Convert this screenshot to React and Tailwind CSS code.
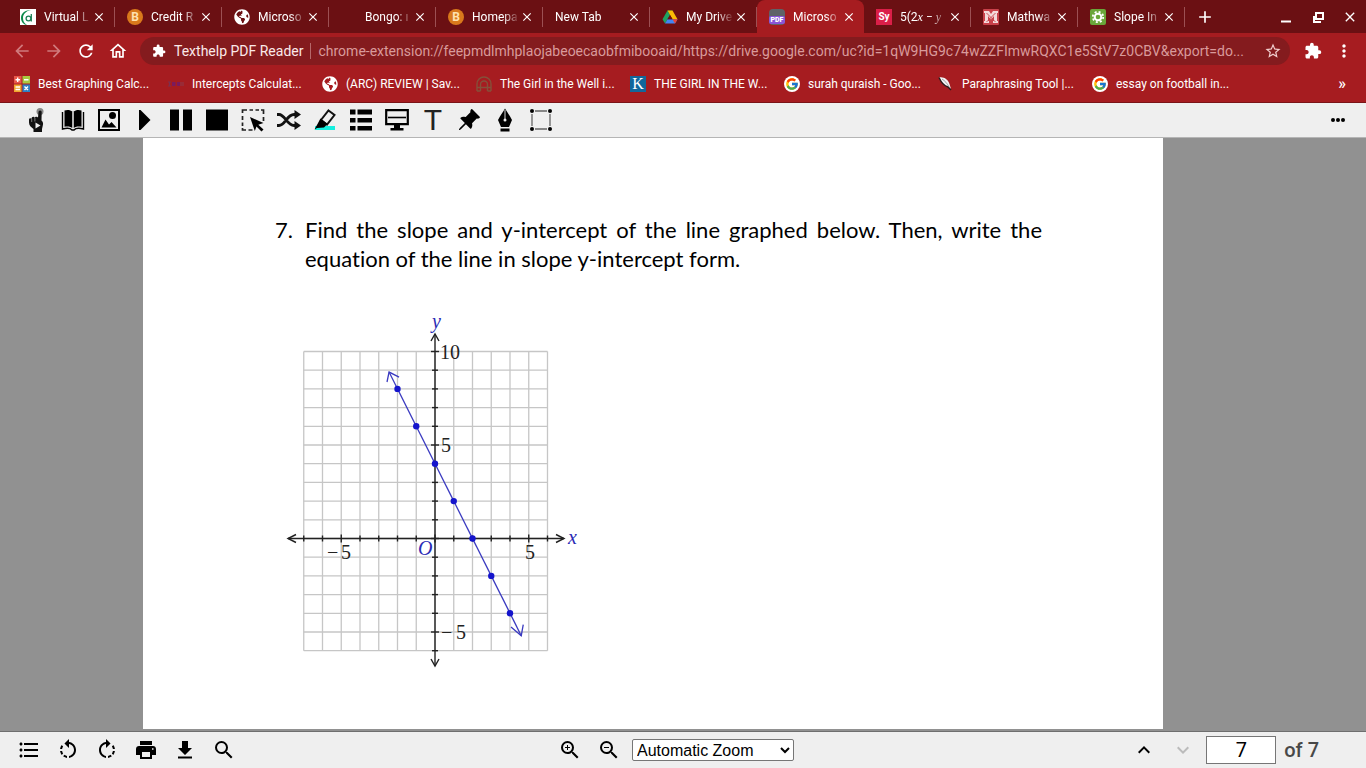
import {
  MdAdd,
  MdArrowBack,
  MdArrowForward,
  MdClose,
  MdExtension,
  MdFormatListBulleted,
  MdKeyboardArrowDown,
  MdKeyboardArrowUp,
  MdMoreVert,
  MdOutlineHome,
  MdRefresh,
  MdRotateLeft,
  MdRotateRight,
  MdSearch,
  MdStarBorder,
  MdZoomIn,
  MdZoomOut,
} from 'react-icons/md';
import { FaGlobeAmericas } from 'react-icons/fa';
import { BsPinAngleFill } from 'react-icons/bs';
import { FcGoogle } from 'react-icons/fc';

/* ---------- favicons ---------- */

const CollegeIcon = () => (
  <svg viewBox="0 0 16 16" className="size-4">
    <rect width="16" height="16" fill="#fff" />
    <path d="M11 1C4 1 1 5 1 9c0 4 3 7 6 7-3-2-4-4-4-7 0-4 3-7 8-8z" fill="#0b8a4b" />
    <circle cx="8.500" cy="9.500" r="2.400" fill="none" stroke="#1c7f55" strokeWidth="1.300" />
    <path d="M11.300 5v7.500" stroke="#1c7f55" strokeWidth="1.300" />
  </svg>
);

const BartlebyIcon = () => (
  <span className="flex size-4 items-center justify-center rounded-full bg-[#d9791c] text-xs font-bold leading-none text-[#ffe2b0]">
    B
  </span>
);

const GlobeIcon = () => <FaGlobeAmericas className="size-4 text-white" />;

const DriveIcon = () => (
  <svg viewBox="0 0 16 16" className="size-4">
    <path d="M5.500 1.500h5L8 6z" fill="#188038" />
    <path d="M5.500 1.500L8 6 3 14.500.500 10.200z" fill="#1ea362" />
    <path d="M10.500 1.500L15.500 10.200h-5L5.500 1.500z" fill="#fbbc05" />
    <path d="M5.500 10.200h10L13 14.500H3z" fill="#4285f4" />
    <path d="M10.500 10.200h5L13 14.500z" fill="#ea4335" />
    <path d="M8 6l2.500 4.200h-5z" fill="#6b1013" />
  </svg>
);

const PdfIcon = () => (
  <span className="flex size-4 items-end justify-center rounded-sm bg-[#5f6368] pb-px">
    <span className="w-4 rounded-xs bg-[#8a55d8] text-center text-[7px] font-black leading-[8px] text-white">PDF</span>
  </span>
);

const SymbolabIcon = () => (
  <span className="flex size-4 items-center justify-center bg-[#db1f48] text-[10px] font-bold leading-none text-white">
    Sy
  </span>
);

const MathwayIcon = () => (
  <svg viewBox="0 0 16 16" className="size-4">
    <rect width="16" height="16" rx="1" fill="#c8414a" />
    <path d="M1 2h5l2 3 2-3h5v2h-1v8h1v2h-5v-2h1V7L8 10.500 5 7v5h1v2H1v-2h1V4H1z" fill="#f3d9da" />
    <path d="M3.500 4l9 9M12.500 4l-9 9" stroke="#c8414a" strokeWidth=".9" />
  </svg>
);

const GearIcon = () => (
  <svg viewBox="0 0 16 16" className="size-4">
    <rect width="16" height="16" rx="2" fill="#6aa63a" />
    <circle cx="8" cy="8" r="3.300" fill="none" stroke="#fff" strokeWidth="2" />
    <circle cx="8" cy="8" r="5.200" fill="none" stroke="#fff" strokeWidth="1.800" strokeDasharray="2.040 2.040" />
  </svg>
);

const CalcIcon = () => (
  <svg viewBox="0 0 16 16" className="size-4">
    <rect width="7.500" height="7.500" fill="#e8574a" />
    <rect x="8.500" width="7.500" height="7.500" fill="#a9c83f" />
    <rect y="8.500" width="7.500" height="7.500" fill="#f1a52c" />
    <rect x="8.500" y="8.500" width="7.500" height="7.500" fill="#2f7fc1" />
    <path
      d="M3.700 1.500v4.500M1.500 3.700H6M10 3.700h4.500M1.500 11h4.500M1.500 13.500h4.500M10.500 10.500l3.500 3.500M14 10.500L10.500 14"
      stroke="#fff"
      strokeWidth="1.400"
    />
  </svg>
);

const SeriesIcon = () => (
  <svg viewBox="0 0 16 16" className="size-4">
    <path d="M0 6h3M0 10h3M1.500 6v4" stroke="#7a3050" />
    <path d="M4 6h3.500v4H4zM9 6h3v4H9z" fill="#7b1a5c" />
    <path d="M13 6v4M15 6v4" stroke="#8c3a4c" />
  </svg>
);

const ArchIcon = () => (
  <svg viewBox="0 0 16 16" className="size-4" fill="none" stroke="#85503a" strokeWidth="1.400">
    <path d="M1 15V8a7 7 0 0 1 14 0v7M4.500 15V8.500a3.500 3.500 0 0 1 7 0V15M1 11.500h14M1 15h3.500M11.500 15H15" />
  </svg>
);

const KIcon = () => (
  <span className="flex size-4 items-center justify-center bg-[#12679b] font-['Liberation_Serif',serif] text-base leading-none text-white">
    K
  </span>
);

const GoogleIcon = () => (
  <span className="flex size-4 items-center justify-center rounded-full bg-white">
    <FcGoogle className="size-3.5" />
  </span>
);

const QuillIcon = () => (
  <svg viewBox="0 0 16 16" className="size-4">
    <path d="M1 1.500c5-1 9 2 10.500 6.500l1.500 5-3-2C6 10 3 6 1 1.500z" fill="#f3f3f3" />
    <path d="M1 1.500c2 4.500 5 8.500 9 9.500l3 3" stroke="#2b1a1a" strokeWidth="1.400" fill="none" />
    <path d="M4 3c3 2 5 4 7 8" stroke="#777" strokeWidth=".7" fill="none" />
  </svg>
);

/* ---------- reader icons, 24 x 24 ---------- */

const HandIcon = () => (
  <svg viewBox="0 0 24 24" className="size-6">
    <circle cx="15" cy="3.500" r="3.500" fill="#888" />
    <path
      d="M13.500 4a1.600 1.600 0 0 1 3.200 0l-.2 8.500c1.500 1 2 3 1.300 5L17 21v3H8.500v-3C6 19 4 17.500 4 14.500V11.500c.3-1.500 2-1.500 2.500-.5 0-2.500 2.500-3 3.200-1.200.5-1.500 2.700-1.500 3.300-.3z"
      fill="#111"
    />
    <path d="M6.700 11v3M9.900 10v3.500" stroke="#aaa" strokeWidth=".7" />
    <path d="M10.500 14.500l5 3-5 3z" fill="#efefef" />
  </svg>
);

const BookIcon = () => (
  <svg viewBox="0 0 24 24" className="size-6">
    <path d="M3.500 2.500c3-1 6-.5 8 1.200V20c-2-1.600-5-2-8-1.200zM20.500 2.500c-3-1-6-.5-8 1.200V20c2-1.600 5-2 8-1.200z" />
    <path d="M1.500 4v17c4-1 8-.8 9.500 1h2c1.500-1.800 5.500-2 9.500-1V4" fill="none" stroke="#000" strokeWidth="1.400" />
    <path d="M12 4v17" stroke="#efefef" />
  </svg>
);

const ImageIcon = () => (
  <svg viewBox="0 0 24 24" className="size-6">
    <rect x="2" y="2" width="20" height="20" fill="none" stroke="#000" strokeWidth="2" />
    <circle cx="15.500" cy="7.500" r="3.500" />
    <path d="M4.500 19.500l4-8 3.500 5 2.500-2.500 5 5.500z" />
  </svg>
);

const PlayIcon = () => (
  <svg viewBox="0 0 24 24" className="size-6">
    <path d="M6 2h1.500L17.500 12 7.500 22H6z" />
  </svg>
);

const PauseIcon = () => (
  <svg viewBox="0 0 24 24" className="size-6">
    <path d="M1 1.500h9v21H1zM14 1.500h9v21h-9z" />
  </svg>
);

const StopIcon = () => (
  <svg viewBox="0 0 24 24" className="size-6">
    <path d="M1 1.500h22v21H1z" />
  </svg>
);

const SelectAreaIcon = () => (
  <svg viewBox="0 0 24 24" className="size-6">
    <path
      d="M1.500 5V2H6M8.500 2H12M14.500 2H18M20 2h2.500v4M22.500 9v4M1.500 8v4M1.500 14.500V18M1.500 20v2H5M7.500 22h4"
      fill="none"
      stroke="#222"
      strokeWidth="1.700"
    />
    <path d="M9 9l13.500 6-5.200 1.700 5.200 4.800-2 2-5-5-1.700 4.500z" />
  </svg>
);

const ShuffleIcon = () => (
  <svg viewBox="0 0 24 24" className="size-6">
    <path
      d="M0 6.500h2c6 0 8 11 15 11h2M0 17.500h2c6 0 8-11 15-11h2"
      fill="none"
      stroke="#111"
      strokeWidth="2.800"
    />
    <path d="M17.500 2l6.500 4.500-6.500 4.500zM17.500 13l6.500 4.500-6.500 4.500z" fill="#111" />
  </svg>
);

const HighlighterIcon = () => (
  <svg viewBox="0 0 24 24" className="size-6">
    <path d="M2 18h20v4H2z" fill="#15efdf" />
    <path d="M15.500 2.500l6 4.500L14 16.500l-6-4.500z" fill="#efefef" stroke="#111" strokeWidth="2" />
    <path d="M7.500 10.500l7 5.500-3.500 3.500-7 .500-2.500 1.500z" />
  </svg>
);

const ListIcon = () => (
  <svg viewBox="0 0 24 24" className="size-6">
    <path d="M1 1.500h5.500V6.500H1zM8.500 1.500H23V6.500H8.500zM1 10h5.500v4.500H1zM8.500 10H23v4.500H8.500zM1 18h5.500v4.500H1zM8.500 18H23v4.500H8.500z" />
  </svg>
);

const ScreenIcon = () => (
  <svg viewBox="0 0 24 24" className="size-6">
    <path d="M1.200 2.200h21.600v14H1.200z" fill="none" stroke="#000" strokeWidth="2.200" />
    <path d="M3 9.500h18" stroke="#000" strokeWidth="1.600" />
    <path d="M9 17h6v3h3.500v2.500h-13V20H9z" />
  </svg>
);

const PenIcon = () => (
  <svg viewBox="0 0 24 24" className="size-6">
    <path d="M12 .5C14 4 17 8 19 12L16 19H8L5 12C7 8 10 4 12 .5z" />
    <path d="M12 2v9" stroke="#efefef" strokeWidth=".9" />
    <circle cx="12" cy="12" r="1.500" fill="#efefef" />
    <path d="M7.500 20.500h9v3h-9z" />
  </svg>
);

const FrameIcon = () => (
  <svg viewBox="0 0 24 24" className="size-6">
    <path d="M3 3h18v18H3z" fill="none" stroke="#666" strokeWidth="1.300" strokeDasharray="12 6" strokeDashoffset="-3" />
    <circle cx="3" cy="3" r="2" />
    <circle cx="21" cy="3" r="2" />
    <circle cx="3" cy="21" r="2" />
    <circle cx="21" cy="21" r="2" />
  </svg>
);

const PrintIcon = () => (
  <svg viewBox="0 0 24 24" className="size-6">
    <path d="M6 3h12v4H6zM5 8h14c1.700 0 3 1.300 3 3v6h-4v4H6v-4H2v-6c0-1.700 1.300-3 3-3z" />
    <path d="M8 14h8v5H8zM18 10.200h1.500v1.500H18z" fill="#efefef" />
  </svg>
);

const DownloadIcon = () => (
  <svg viewBox="0 0 24 24" className="size-6">
    <path d="M9 3h6v7h4l-7 7-7-7h4zM5 18.500h14v2H5z" />
  </svg>
);

/* ---------- data ---------- */

const tabs = [
  { title: 'Virtual L', Icon: CollegeIcon },
  { title: 'Credit R', Icon: BartlebyIcon },
  { title: 'Microso', Icon: GlobeIcon },
  { title: 'Bongo: ı', Icon: () => <span className="size-4" /> },
  { title: 'Homepa', Icon: BartlebyIcon },
  { title: 'New Tab' },
  { title: 'My Drive', Icon: DriveIcon },
  { title: 'Microso', Icon: PdfIcon, active: true },
  {
    title: (
      <>
        5(2<i className="font-['Liberation_Serif',serif]">x</i> − <i className="font-['Liberation_Serif',serif]">y</i>
      </>
    ),
    Icon: SymbolabIcon,
  },
  { title: 'Mathwa', Icon: MathwayIcon },
  { title: 'Slope In', Icon: GearIcon },
];

const bookmarks = [
  { label: 'Best Graphing Calc...', Icon: CalcIcon },
  { label: 'Intercepts Calculat...', Icon: SeriesIcon },
  { label: '(ARC) REVIEW | Sav...', Icon: GlobeIcon },
  { label: 'The Girl in the Well i...', Icon: ArchIcon },
  { label: 'THE GIRL IN THE W...', Icon: KIcon },
  { label: 'surah quraish - Goo...', Icon: GoogleIcon },
  { label: 'Paraphrasing Tool |...', Icon: QuillIcon },
  { label: 'essay on football in...', Icon: GoogleIcon },
];

const tools = [
  { label: 'Click to speak', icon: <HandIcon /> },
  { label: 'Dictionary', icon: <BookIcon /> },
  { label: 'Picture dictionary', icon: <ImageIcon /> },
  { label: 'Play', icon: <PlayIcon /> },
  { label: 'Pause', icon: <PauseIcon /> },
  { label: 'Stop', icon: <StopIcon /> },
  { label: 'Screenshot reader', icon: <SelectAreaIcon /> },
  { label: 'Translate', icon: <ShuffleIcon /> },
  { label: 'Highlight', icon: <HighlighterIcon /> },
  { label: 'Collect highlights', icon: <ListIcon /> },
  { label: 'Simplify', icon: <ScreenIcon /> },
  {
    label: 'Typewriter',
    icon: <span className="font-['Liberation_Sans',sans-serif] text-3xl leading-6 text-[#222]">T</span>,
  },
  { label: 'Push pin', icon: <BsPinAngleFill className="size-6" /> },
  { label: 'Freehand', icon: <PenIcon /> },
  { label: 'Shape', icon: <FrameIcon /> },
];

const pageTools = [
  { label: 'Outline', icon: <MdFormatListBulleted className="size-6" /> },
  { label: 'Rotate left', icon: <MdRotateLeft className="size-6" /> },
  { label: 'Rotate right', icon: <MdRotateRight className="size-6" /> },
  { label: 'Print', icon: <PrintIcon /> },
  { label: 'Download', icon: <DownloadIcon /> },
  { label: 'Find', icon: <MdSearch className="size-6" /> },
];

/* ---------- browser chrome ---------- */

function Tab({ title, Icon, active }) {
  return (
    <div className={`flex h-full w-[107px] min-w-0 items-center pl-3 ${active ? 'rounded-t-lg bg-[#a61c20]' : ''}`}>
      {Icon && (
        <span className="mr-2 flex shrink-0">
          <Icon />
        </span>
      )}
      <span className="min-w-0 flex-1 whitespace-nowrap text-xs leading-4 [mask-image:linear-gradient(to_right,black_65%,transparent)]">
        {title}
      </span>
      <button aria-label="Close tab" className="mr-2 shrink-0">
        <MdClose className="size-3.5" />
      </button>
      {!active && <span className="h-5 w-px shrink-0 bg-[#9c5053]" />}
    </div>
  );
}

function TabStrip() {
  return (
    <div className="flex h-[33px] items-center bg-[#6b1013] pl-2">
      {tabs.map((tab, i) => (
        <Tab key={i} {...tab} />
      ))}
      <button aria-label="New tab" className="ml-2.5">
        <MdAdd className="size-5" />
      </button>
      <div className="ml-auto flex items-center gap-4 pr-2">
        <button aria-label="Minimize">
          <svg viewBox="0 0 16 16" className="size-4">
            <path d="M3 12.500h10" stroke="#fff" strokeWidth="2" />
          </svg>
        </button>
        <button aria-label="Restore">
          <svg viewBox="0 0 16 16" className="size-4" fill="none" stroke="#fff" strokeWidth="2">
            <path d="M6 4h7v6H6zM4 7v6h7" />
          </svg>
        </button>
        <button aria-label="Close window">
          <MdClose className="size-4" />
        </button>
      </div>
    </div>
  );
}

function AddressBar() {
  return (
    <div className="flex h-9 items-center">
      <div className="flex shrink-0 gap-3 pl-3">
        <button aria-label="Back" className="text-[#d07a7c]">
          <MdArrowBack className="size-5" />
        </button>
        <button aria-label="Forward" className="text-[#d07a7c]">
          <MdArrowForward className="size-5" />
        </button>
        <button aria-label="Reload">
          <MdRefresh className="size-5" />
        </button>
        <button aria-label="Home">
          <MdOutlineHome className="size-5" />
        </button>
      </div>
      <div className="ml-3 flex h-7 min-w-0 flex-1 items-center rounded-full bg-[#841b1e] pl-3 pr-2 text-sm">
        <MdExtension className="size-3.5 shrink-0" />
        <span className="ml-2 shrink-0 text-[#fbe9e9]">Texthelp PDF Reader</span>
        <span className="mx-[7px] h-4 w-px shrink-0 bg-[#b5686a]" />
        <input
          aria-label="Address"
          readOnly
          value="chrome-extension://feepmdlmhplaojabeoecaobfmibooaid/https://drive.google.com/uc?id=1qW9HG9c74wZZFImwRQXC1e5StV7z0CBV&export=do..."
          className="min-w-0 flex-1 bg-transparent text-[#d99a9b] outline-none"
        />
        <button aria-label="Bookmark this page" className="ml-2 text-[#f1cfcf]">
          <MdStarBorder className="size-[18px]" />
        </button>
      </div>
      <div className="flex items-center gap-3 pl-3.5 pr-3">
        <button aria-label="Extensions">
          <MdExtension className="size-[18px]" />
        </button>
        <button aria-label="Menu">
          <MdMoreVert className="size-5" />
        </button>
      </div>
    </div>
  );
}

function BookmarksBar() {
  return (
    <nav className="flex h-[33px] items-center pb-1 pl-3.5">
      {bookmarks.map(({ label, Icon }) => (
        <a key={label} href="#" className="flex w-[154px] min-w-0 items-center gap-2 text-xs leading-4">
          <span className="shrink-0">
            <Icon />
          </span>
          <span className="whitespace-nowrap">{label}</span>
        </a>
      ))}
      <button aria-label="More bookmarks" className="ml-auto pr-5 text-base font-medium leading-4">
        »
      </button>
    </nav>
  );
}

/* ---------- document ---------- */

const UNIT_X = 18.75;
const UNIT_Y = 18.7;
const OX = 155;
const OY = 228.5;
const px = (x) => OX + x * UNIT_X;
const py = (y) => OY - y * UNIT_Y;
const lineY = (x) => 4 - 2 * x;
const range = (from, to) => Array.from({ length: to - from + 1 }, (_, i) => from + i);

function Graph() {
  return (
    <svg
      viewBox="0 0 310 370"
      width="310"
      height="370"
      role="img"
      aria-label="Graph of a line through (0, 4) and (2, 0)"
      className="font-['Liberation_Serif',serif]"
    >
      <g stroke="#c6c6c6" strokeWidth="1.300">
        {range(-7, 6).map((x) => (
          <line key={x} x1={px(x)} x2={px(x)} y1={py(10)} y2={py(-6)} />
        ))}
        {range(-6, 10).map((y) => (
          <line key={y} x1={px(-7)} x2={px(6)} y1={py(y)} y2={py(y)} />
        ))}
      </g>
      <g stroke="#222" strokeWidth="1.400" fill="none">
        <path d={`M8 ${OY}H284M${OX} 24V356`} />
        <path d={`M16 ${OY - 4}L8 ${OY}l8 4M276 ${OY - 4}l8 4-8 4`} />
        <path d={`M${OX - 4} 31L${OX} 24l4 7M${OX - 4} 349L${OX} 356l4-7`} />
        {range(-7, 6).map((x) => (
          <line key={x} x1={px(x)} x2={px(x)} y1={OY - (x % 5 ? 3 : 4)} y2={OY + (x % 5 ? 3 : 4)} />
        ))}
        {range(-6, 10).map((y) => (
          <line key={y} x1={OX - (y % 5 ? 3 : 4)} x2={OX + (y % 5 ? 3 : 4)} y1={py(y)} y2={py(y)} />
        ))}
      </g>
      <g stroke="#3a3ac0" strokeWidth="1.300" fill="none">
        <line x1={px(-2.45)} y1={py(lineY(-2.45))} x2={px(4.6)} y2={py(lineY(4.6))} />
        <path d={`M107 72L${px(-2.45)} ${py(lineY(-2.45))}l10 5`} />
        <path d={`M231 317L${px(4.6)} ${py(lineY(4.6))}l2-11`} />
      </g>
      {range(-2, 4).map((x) => (
        <circle key={x} cx={px(x)} cy={py(lineY(x))} r="3.200" fill="#1414cc" />
      ))}
      <g fontSize="20" fill="#222">
        <text x="160" y="49">10</text>
        <text x="161" y="142">5</text>
        <text x="161" y="329">−</text>
        <text x="176" y="329">5</text>
        <text x="47" y="249">−</text>
        <text x="61" y="249">5</text>
        <text x="245" y="249">5</text>
      </g>
      <g fontSize="20" fontStyle="italic" fill="#2b2bb5">
        <text x="152" y="18">y</text>
        <text x="288" y="234">x</text>
        <text x="138" y="245">O</text>
      </g>
    </svg>
  );
}

function Page() {
  return (
    <article className="min-w-0 flex-1 bg-white pl-[132px] pr-[121px] pt-[77px] text-black">
      <div className="flex font-['Lato',sans-serif] text-[22px] leading-[29px] [font-variant-ligatures:none]">
        <span className="w-[30px] shrink-0">7.</span>
        <p className="flex-1">
          <span className="block [text-align-last:justify]">
            Find the slope and y-intercept of the line graphed below. Then, write the
          </span>
          <span className="block">equation of the line in slope y-intercept form.</span>
        </p>
      </div>
      <div className="mt-[37px] pl-[5px]">
        <Graph />
      </div>
    </article>
  );
}

function ReaderToolbar() {
  return (
    <div className="flex h-9 items-center border-b border-t border-b-[#b5b5b5] border-t-[#7a1417] bg-[#efefef] pl-[19px] pr-4 text-black">
      {tools.map(({ label, icon }) => (
        <button key={label} aria-label={label} className="flex h-6 w-9 items-center justify-center">
          {icon}
        </button>
      ))}
      <button aria-label="More tools" className="ml-auto">
        <svg viewBox="0 0 24 24" className="size-6">
          <circle cx="7" cy="12" r="2" />
          <circle cx="12" cy="12" r="2" />
          <circle cx="17" cy="12" r="2" />
        </svg>
      </button>
    </div>
  );
}

function ReaderFooter() {
  return (
    <footer className="grid h-[37px] grid-cols-[1fr_auto_1fr] items-center border-t border-[#6e6e6e] bg-[#efefef] text-black">
      <div className="flex pl-[9px]">
        {pageTools.map(({ label, icon }) => (
          <button key={label} aria-label={label} className="flex w-[39px] justify-center">
            {icon}
          </button>
        ))}
      </div>
      <div className="flex items-center pr-[22px]">
        <button aria-label="Zoom in" className="flex w-[39px] justify-center">
          <MdZoomIn className="size-6" />
        </button>
        <button aria-label="Zoom out" className="flex w-[39px] justify-center">
          <MdZoomOut className="size-6" />
        </button>
        <select
          aria-label="Zoom"
          className="ml-1 h-[22px] w-[162px] rounded-xs border border-[#767676] bg-white font-['Liberation_Sans',sans-serif] text-base leading-5"
        >
          <option>Automatic Zoom</option>
          <option>Actual Size</option>
          <option>Page Width</option>
        </select>
      </div>
      <div className="flex items-center justify-end pr-[47px]">
        <button aria-label="Previous page" className="flex w-[39px] justify-center">
          <MdKeyboardArrowUp className="size-6" />
        </button>
        <button aria-label="Next page" disabled className="flex w-[39px] justify-center text-[#bbb]">
          <MdKeyboardArrowDown className="size-6" />
        </button>
        <input
          id="page-number"
          defaultValue="7"
          aria-label="Page"
          className="ml-1 h-7 w-[70px] border border-[#767676] bg-white text-center text-xl"
        />
        <label htmlFor="page-number" className="ml-2 text-xl font-medium leading-6 text-[#484848]">
          of 7
        </label>
      </div>
    </footer>
  );
}

export default function App() {
  return (
    <div className="flex h-screen flex-col overflow-hidden bg-[#919191] font-['Roboto',sans-serif] text-white">
      <header className="bg-[#a61c20]">
        <TabStrip />
        <AddressBar />
        <BookmarksBar />
      </header>
      <ReaderToolbar />
      <main className="flex min-h-0 flex-1 pb-0.5 pl-[143px] pr-[203px]">
        <Page />
      </main>
      <ReaderFooter />
    </div>
  );
}
